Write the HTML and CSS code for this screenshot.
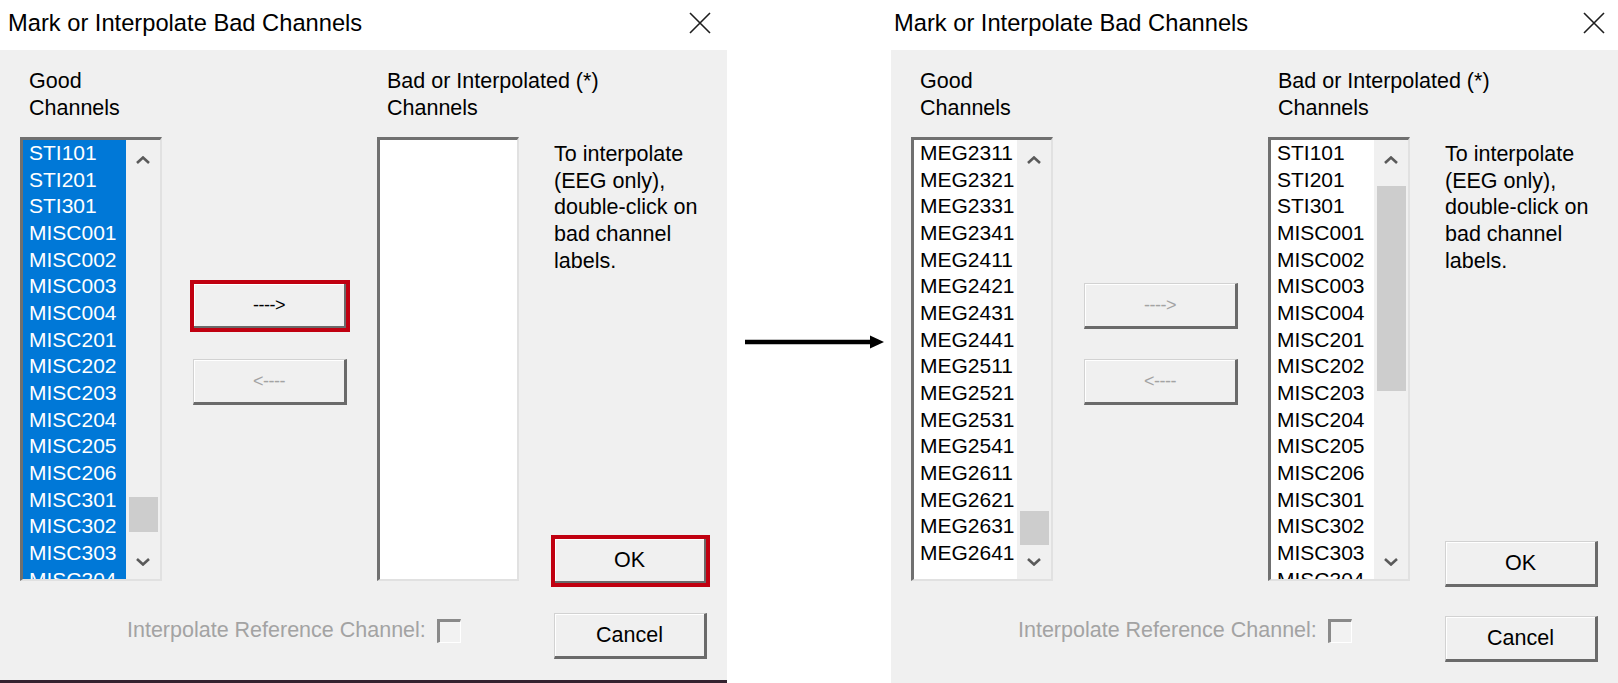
FILE: index.html
```html
<!DOCTYPE html>
<html lang="en">
<head>
<meta charset="utf-8">
<title>Mark or Interpolate Bad Channels</title>
<link rel="stylesheet" href="styles.css">
</head>
<body>
<div class="stage">

  <section class="dialog dialog-a">
    <header class="titlebar">
      <span class="title">Mark or Interpolate Bad Channels</span>
      <svg class="close" viewBox="0 0 22 22"><path d="M1 1 L21 21 M21 1 L1 21" /></svg>
    </header>
    <div class="dlg-body">
      <div class="lbl lbl-good">Good<br>Channels</div>
      <div class="lbl lbl-bad">Bad or Interpolated (*)<br>Channels</div>

      <div class="listbox list-good">
        <ul class="items sel">
          <li>STI101</li><li>STI201</li><li>STI301</li><li>MISC001</li><li>MISC002</li><li>MISC003</li><li>MISC004</li><li>MISC201</li><li>MISC202</li><li>MISC203</li><li>MISC204</li><li>MISC205</li><li>MISC206</li><li>MISC301</li><li>MISC302</li><li>MISC303</li><li>MISC304</li>
        </ul>
        <div class="sbar">
          <div class="sb-up"><svg class="chev" viewBox="0 0 14 8"><polyline points="1,7 7,1.5 13,7" /></svg></div>
          <div class="sb-track"><div class="sb-thumb" style="margin-top:317px;height:35px"></div></div>
          <div class="sb-down"><svg class="chev" viewBox="0 0 14 8"><polyline points="1,1 7,6.5 13,1" /></svg></div>
        </div>
      </div>

      <div class="movers">
        <button class="btn btn-move marked">----&gt;</button>
        <button class="btn btn-move disabled">&lt;----</button>
      </div>

      <div class="listbox list-bad"></div>

      <div class="side">
        <p class="hint">To interpolate<br>(EEG only),<br>double-click on<br>bad channel<br>labels.</p>
        <button class="btn btn-ok marked">OK</button>
        <button class="btn btn-cancel">Cancel</button>
      </div>

      <div class="interp">
        <span class="interp-text">Interpolate Reference Channel:</span>
        <span class="check"></span>
      </div>
    </div>
    <div class="strip"></div>
  </section>

  <div class="between">
    <svg class="flow-arrow" viewBox="0 0 139 14"><path class="shaft" d="M0 7 H127" /><polygon points="125,0.5 139,7 125,13.5" /></svg>
  </div>

  <section class="dialog dialog-b">
    <header class="titlebar">
      <span class="title">Mark or Interpolate Bad Channels</span>
      <svg class="close" viewBox="0 0 22 22"><path d="M1 1 L21 21 M21 1 L1 21" /></svg>
    </header>
    <div class="dlg-body">
      <div class="lbl lbl-good">Good<br>Channels</div>
      <div class="lbl lbl-bad">Bad or Interpolated (*)<br>Channels</div>

      <div class="listbox list-good">
        <ul class="items">
          <li>MEG2311</li><li>MEG2321</li><li>MEG2331</li><li>MEG2341</li><li>MEG2411</li><li>MEG2421</li><li>MEG2431</li><li>MEG2441</li><li>MEG2511</li><li>MEG2521</li><li>MEG2531</li><li>MEG2541</li><li>MEG2611</li><li>MEG2621</li><li>MEG2631</li><li>MEG2641</li>
        </ul>
        <div class="sbar">
          <div class="sb-up"><svg class="chev" viewBox="0 0 14 8"><polyline points="1,7 7,1.5 13,7" /></svg></div>
          <div class="sb-track"><div class="sb-thumb" style="margin-top:331px;height:34px"></div></div>
          <div class="sb-down"><svg class="chev" viewBox="0 0 14 8"><polyline points="1,1 7,6.5 13,1" /></svg></div>
        </div>
      </div>

      <div class="movers">
        <button class="btn btn-move disabled">----&gt;</button>
        <button class="btn btn-move disabled">&lt;----</button>
      </div>

      <div class="listbox list-bad">
        <ul class="items">
          <li>STI101</li><li>STI201</li><li>STI301</li><li>MISC001</li><li>MISC002</li><li>MISC003</li><li>MISC004</li><li>MISC201</li><li>MISC202</li><li>MISC203</li><li>MISC204</li><li>MISC205</li><li>MISC206</li><li>MISC301</li><li>MISC302</li><li>MISC303</li><li>MISC304</li>
        </ul>
        <div class="sbar">
          <div class="sb-up"><svg class="chev" viewBox="0 0 14 8"><polyline points="1,7 7,1.5 13,7" /></svg></div>
          <div class="sb-track"><div class="sb-thumb" style="margin-top:6px;height:205px"></div></div>
          <div class="sb-down"><svg class="chev" viewBox="0 0 14 8"><polyline points="1,1 7,6.5 13,1" /></svg></div>
        </div>
      </div>

      <div class="side">
        <p class="hint">To interpolate<br>(EEG only),<br>double-click on<br>bad channel<br>labels.</p>
        <button class="btn btn-ok">OK</button>
        <button class="btn btn-cancel">Cancel</button>
      </div>

      <div class="interp">
        <span class="interp-text">Interpolate Reference Channel:</span>
        <span class="check"></span>
      </div>
    </div>
  </section>

</div>
</body>
</html>
```

FILE: styles.css
```css
* {
  box-sizing: border-box;
  margin: 0;
  padding: 0;
}

html, body {
  width: 1618px;
  height: 683px;
  overflow: hidden;
  background: #ffffff;
}

body {
  font-family: "Liberation Sans", Arial, sans-serif;
  color: #000;
}

.stage {
  display: flex;
  height: 683px;
}

/* ---------- dialog frame ---------- */
.dialog {
  width: 727px;
  flex: none;
  display: flex;
  flex-direction: column;
}

.titlebar {
  height: 50px;
  flex: none;
  display: flex;
  align-items: center;
  justify-content: space-between;
  padding: 0 16px 4px 8px;
  background: #fff;
}

.dialog-b .titlebar {
  padding: 0 13px 4px 3px;
}

.title {
  font-size: 23.7px;
  color: #000;
}

.close {
  width: 22px;
  height: 22px;
}

.close path {
  stroke: #1e1e1e;
  stroke-width: 1.6;
  fill: none;
}

.dlg-body {
  flex: 1;
  background: #f0f0f0;
  display: grid;
  grid-template-columns: 142px 215px 142px 1fr;
  grid-template-rows: 87px 444px 1fr;
  padding-left: 20px;
  font-size: 21.5px;
}

.strip {
  height: 3px;
  flex: none;
  background: #34222f;
}

/* ---------- labels ---------- */
.lbl {
  line-height: 26.5px;
  padding-top: 18px;
  white-space: nowrap;
}

.lbl-good {
  grid-row: 1;
  grid-column: 1;
  padding-left: 9px;
}

.lbl-bad {
  grid-row: 1;
  grid-column: 3 / 5;
  padding-left: 10px;
}

/* ---------- list boxes ---------- */
.listbox {
  grid-row: 2;
  display: flex;
  background: #fff;
  border-style: solid;
  border-width: 3px 2px 2px 3px;
  border-color: #707070 #e1e1e1 #e1e1e1 #707070;
  overflow: hidden;
}

.list-good { grid-column: 1; }
.list-bad { grid-column: 3; }

.items {
  list-style: none;
  flex: 1;
  min-width: 0;
  padding-left: 6px;
  font-size: 21px;
  line-height: 26.67px;
  white-space: nowrap;
  overflow: hidden;
}

.items.sel {
  background: #0078d7;
  color: #fff;
}

.sbar {
  width: 34px;
  flex: none;
  background: #f0f0f0;
  display: flex;
  flex-direction: column;
}

.sb-up,
.sb-down {
  flex: none;
  display: flex;
  align-items: center;
  justify-content: center;
}

.sb-up { height: 40px; }
.sb-down { height: 34px; }

.sb-track {
  flex: 1;
  padding: 0 2px 0 3px;
}

.sb-thumb {
  background: #cdcdcd;
}

.chev {
  width: 14px;
  height: 8px;
}

.chev polyline {
  fill: none;
  stroke: #5a5a5a;
  stroke-width: 2.6;
}

/* ---------- buttons ---------- */
.movers {
  grid-row: 2;
  grid-column: 2;
  display: flex;
  flex-direction: column;
  gap: 30px;
  padding: 146px 0 0 31px;
}

.btn {
  font-family: "Liberation Sans", Arial, sans-serif;
  font-size: 21.5px;
  color: #000;
  background: #f0f0f0;
  border-style: solid;
  border-width: 1px 3px 3px 1px;
  border-color: #d2d2d2 #6a6a6a #6a6a6a #d2d2d2;
  box-shadow: inset 1px 1px 0 #ffffff;
  height: 46px;
  flex: none;
}

.btn-move {
  width: 154px;
  font-size: 18px;
  letter-spacing: -0.5px;
}

.btn.disabled {
  color: #a3a3a3;
}

.btn.marked {
  outline: 4px solid #c00010;
  outline-offset: -1px;
}

.side {
  grid-row: 2 / 4;
  grid-column: 4;
  display: flex;
  flex-direction: column;
  padding: 4px 0 21px 35px;
}

.hint {
  line-height: 26.67px;
  white-space: nowrap;
}

.btn-ok,
.btn-cancel {
  width: 153px;
}

.btn-ok {
  margin-top: auto;
}

.btn-cancel {
  margin-top: 29px;
}

/* ---------- interpolate reference ---------- */
.interp {
  grid-row: 3;
  grid-column: 1 / 4;
  align-self: start;
  display: flex;
  align-items: center;
  gap: 11px;
  padding: 37px 0 0 107px;
  color: #a3a3a3;
  white-space: nowrap;
}

.check {
  width: 24px;
  height: 24px;
  flex: none;
  background: #f2f2f2;
  border-style: solid;
  border-width: 3px 1px 1px 3px;
  border-color: #8a8a8a #ffffff #ffffff #8a8a8a;
}

/* ---------- arrow between dialogs ---------- */
.between {
  width: 164px;
  flex: none;
  padding: 335px 0 0 18px;
}

.flow-arrow {
  width: 139px;
  height: 14px;
  display: block;
}

.flow-arrow .shaft {
  stroke: #000;
  stroke-width: 4.5;
}

.flow-arrow polygon {
  fill: #000;
}
```
